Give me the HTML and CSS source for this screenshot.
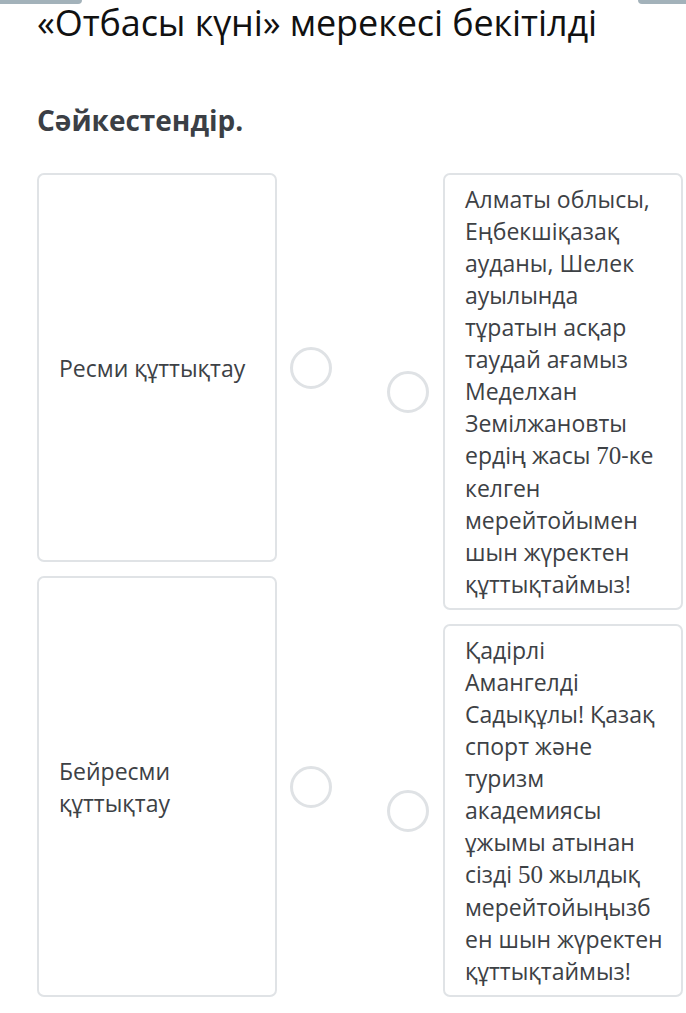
FILE: index.html
```html
<!DOCTYPE html>
<html lang="kk">
<head>
    <meta charset="UTF-8">
    <meta name="viewport" content="width=device-width, initial-scale=1.0">
    <title>Сәйкестендір</title>
    <link rel="stylesheet" href="styles.css">
</head>
<body>
    <div class="tabs">
        <span class="tab tab-left"></span>
        <span class="tab tab-right"></span>
    </div>

    <h1 class="page-title">«Отбасы күні» мерекесі бекітілді</h1>

    <div class="question">
        <h2 class="question-prompt">Сәйкестендір.</h2>

        <div class="match">
            <div class="match-col match-left">
                <div class="match-item">
                    <div class="match-card">Ресми құттықтау</div>
                    <span class="match-dot"></span>
                </div>
                <div class="match-item">
                    <div class="match-card">Бейресми құттықтау</div>
                    <span class="match-dot"></span>
                </div>
            </div>

            <div class="match-col match-right">
                <div class="match-item">
                    <span class="match-dot"></span>
                    <div class="match-card">Алматы облысы, Еңбекшіқазақ ауданы, Шелек ауылында тұратын асқар таудай ағамыз Меделхан Земілжановты ердің жасы <span class="num">70</span>-ке келген мерейтойымен шын жүректен құттықтаймыз!</div>
                </div>
                <div class="match-item">
                    <span class="match-dot"></span>
                    <div class="match-card">Қадірлі Амангелді Садықұлы! Қазақ спорт және туризм академиясы ұжымы атынан сізді <span class="num">50</span> жылдық мерейтойыңызбен шын жүректен құттықтаймыз!</div>
                </div>
            </div>
        </div>
    </div>
</body>
</html>
```

FILE: styles.css
```css
body {
    margin: 0;
    background-color: #fff;
    font-family: "Open Sans", "Noto Sans", sans-serif;
    color: #3d4145;
}

.tabs {
    position: absolute;
    top: 0;
    left: 0;
    right: 0;
    display: flex;
    justify-content: space-between;
}

.tab {
    display: block;
    height: 4px;
    background-color: #a3b2ba;
}

.tab-left {
    width: 82px;
    border-bottom-right-radius: 4px;
}

.tab-right {
    width: 48px;
    border-bottom-left-radius: 4px;
}

.page-title {
    margin: 0;
    padding: 1px 0 0 37px;
    font-size: 36px;
    font-weight: 400;
    line-height: 44px;
    letter-spacing: -0.1px;
    color: #111;
    white-space: nowrap;
}

.question {
    padding: 57px 3px 20px 37px;
}

.question-prompt {
    margin: 0 0 35px;
    font-size: 28px;
    font-weight: 700;
    line-height: 36px;
    color: #3b3f45;
}

.match {
    display: flex;
    align-items: stretch;
    gap: 55px;
}

.match-col {
    display: flex;
    flex-direction: column;
    gap: 14px;
}

.match-item {
    display: flex;
    align-items: center;
    gap: 13px;
}

.match-left .match-item {
    flex: 1 1 auto;
}

.match-right .match-item {
    gap: 14px;
}

.match-card {
    box-sizing: border-box;
    width: 240px;
    align-self: stretch;
    display: flex;
    align-items: center;
    padding: 8px 17.6px 8px 20px;
    border: 2px solid #e0e3e6;
    border-radius: 7px;
    font-size: 23px;
    line-height: 32px;
    overflow-wrap: break-word;
}

.match-right .match-card {
    display: block;
}

.match-dot {
    flex-shrink: 0;
    box-sizing: border-box;
    width: 42px;
    height: 42px;
    border: 3px solid #dfe2e5;
    border-radius: 50%;
}

.num {
    font-family: "Liberation Serif", serif;
    font-size: 25px;
}
```
